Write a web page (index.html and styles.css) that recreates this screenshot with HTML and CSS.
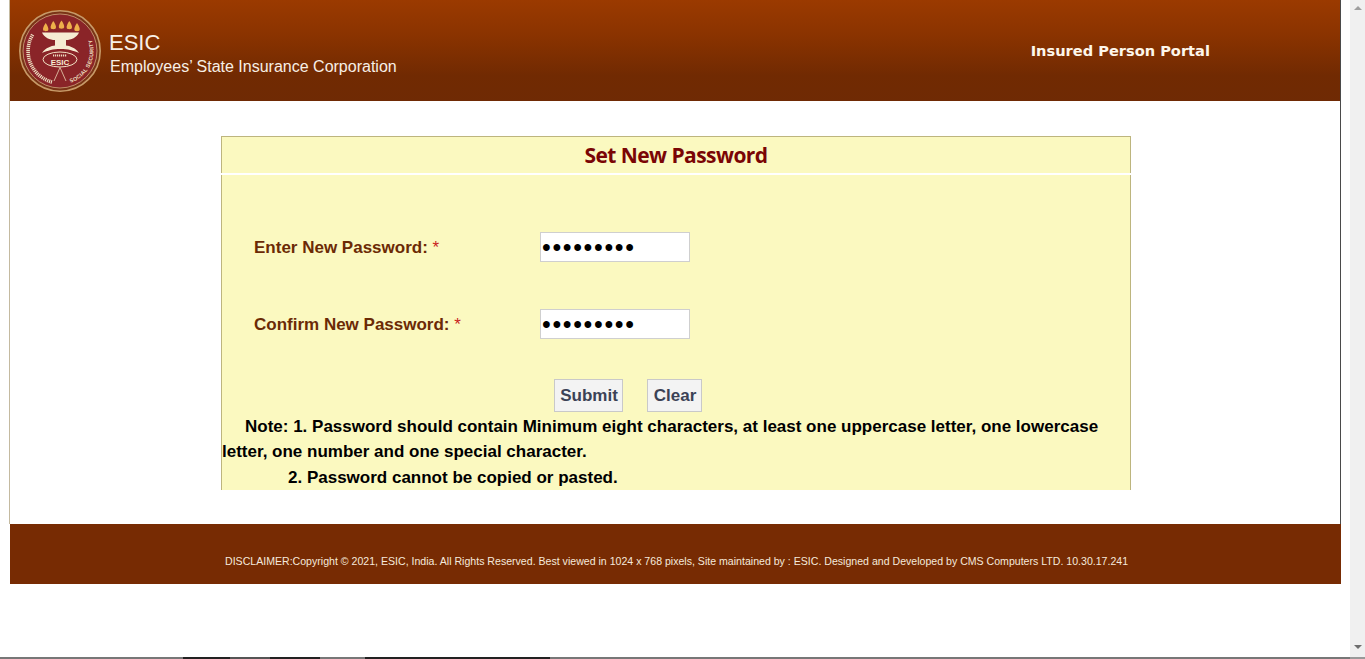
FILE: index.html
```html
<!DOCTYPE html>
<html lang="en">
<head>
<meta charset="utf-8">
<title>ESIC - Set New Password</title>
<link rel="stylesheet" href="styles.css">
</head>
<body>
<div class="window">
  <div class="page">
    <div class="frame">
      <header class="top">
        <svg class="logo" viewBox="0 0 82 82" aria-label="ESIC logo">
          <circle cx="41" cy="41" r="40.2" fill="#7a3416" stroke="#c79a68" stroke-width="1.6"/>
          <circle cx="41" cy="41" r="37" fill="#8a2428" stroke="#cfa67c" stroke-width=".8"/>
          <g fill="#eeb04a">
            <path d="M26.7 13c2 3 3 5 2.6 7-.4 1.6-4.8 1.6-5.2 0-.4-2 .6-4 2.6-7z"/>
            <path d="M34.3 11c2 3 3 5 2.6 7-.4 1.6-4.8 1.6-5.2 0-.4-2 .6-4 2.6-7z"/>
            <path d="M42.5 10.5c2 3 3 5 2.6 7-.4 1.6-4.8 1.6-5.2 0-.4-2 .6-4 2.6-7z"/>
            <path d="M50.3 11c2 3 3 5 2.6 7-.4 1.6-4.8 1.6-5.2 0-.4-2 .6-4 2.6-7z"/>
            <path d="M58 13c2 3 3 5 2.6 7-.4 1.6-4.8 1.6-5.2 0-.4-2 .6-4 2.6-7z"/>
          </g>
          <path class="lamp" d="M23 22.5h37c-2 5-8 7.500-13 7.500v5.500c4 .5 9 2 13 7.500-6-2.500-11-4-18.500-4s-12.500 1.500-18.500 4c4-5.500 9-7 13-7.500v-5.500c-5 0-11-2.500-13-7.500z"/>
          <ellipse cx="41" cy="49.500" rx="17" ry="7.500" fill="#8a2428" stroke="#f2e3c6" stroke-width="1"/>
          <path class="script script-small" d="M34 45.600h14"/>
          <text class="logo-word" x="41" y="54.500" text-anchor="middle">ESIC</text>
          <path d="M41 57.500 35 71M41 57.500 47 71" stroke="#e9d3b4" stroke-width=".8" fill="none"/>
          <path class="script" d="M33 72A32 32 0 0 1 14 24"/>
          <path id="ring" d="M51.500 72.800A33.500 33.500 0 0 0 68 21" fill="none"/>
          <text class="logo-ring"><textPath href="#ring">SOCIAL SECURITY</textPath></text>
        </svg>
        <div class="brand">
          <div class="brand-name">ESIC</div>
          <div class="brand-sub">Employees’ State Insurance Corporation</div>
        </div>
        <div class="portal">Insured Person Portal</div>
      </header>
      <main class="content">
        <section class="panel">
          <h1 class="panel-title">Set New Password</h1>
          <form class="panel-body">
            <div class="field">
              <label class="field-label" for="p1">Enter New Password: <span class="req">*</span></label>
              <input class="field-input" id="p1" type="password" value="abcdefghi">
            </div>
            <div class="field">
              <label class="field-label" for="p2">Confirm New Password: <span class="req">*</span></label>
              <input class="field-input" id="p2" type="password" value="abcdefghi">
            </div>
            <div class="actions">
              <button class="btn btn-submit" type="button">Submit</button>
              <button class="btn btn-clear" type="button">Clear</button>
            </div>
            <p class="note">Note: 1. Password should contain Minimum eight characters, at least one uppercase letter, one lowercase letter, one number and one special character.</p>
            <p class="note note-2">2. Password cannot be copied or pasted.</p>
          </form>
        </section>
      </main>
    </div>
    <footer class="foot">DISCLAIMER:Copyright © 2021, ESIC, India. All Rights Reserved. Best viewed in 1024 x 768 pixels, Site maintained by : ESIC. Designed and Developed by CMS Computers LTD. 10.30.17.241</footer>
  </div>
  <div class="scrollbar">
    <span class="arrow arrow-up"></span>
    <span class="arrow arrow-down"></span>
  </div>
</div>
<div class="taskbar"></div>
</body>
</html>
```
FILE: styles.css
```css
* { box-sizing: border-box; }
html, body { margin: 0; height: 100%; overflow: hidden; background: #fff; }
body { display: flex; flex-direction: column; font-family: "Liberation Sans", Arial, sans-serif; }
.window { flex: 1; display: flex; min-height: 0; }
.page { width: 1350px; padding-left: 9px; }
.frame { width: 1332px; height: 524px; border-left: 1px solid #c4baa0; border-right: 1px solid #4a4a4a; }
.top { height: 101px; display: flex; align-items: center; background: linear-gradient(#9b3a00 0%, #8a3300 35%, #712a02 75%, #6f2a04 100%); }
.logo { width: 82px; height: 82px; margin-left: 9px; flex: none; }
.lamp { fill: #f6ecd2; }
.logo-word { font: bold 8px "Liberation Sans", sans-serif; fill: #f6ecd2; }
.logo-ring { font: bold 5.400px "Liberation Sans", sans-serif; fill: #f0e0c4; letter-spacing: .3px; }
.script { fill: none; stroke: #ecdcc0; stroke-width: 3.600; stroke-dasharray: 1.200 .8; }
.script-small { stroke-width: 2px; }
.brand { align-self: flex-start; margin-left: 9px; color: #f7efe6; padding-top: 29px; }
.brand-name { font-size: 22px; line-height: 27px; margin-left: -1px; }
.brand-sub { font-size: 16px; line-height: 20px; margin-top: 1px; }
.portal { align-self: flex-start; margin-left: 634px; padding-top: 42px; font: bold 14.600px "DejaVu Sans", Verdana, sans-serif; color: #fdf6ea; width: 190px; }
.content { padding: 35px 0 0 211px; }
.panel { width: 910px; height: 354px; background: #fbf9c0; border: 1px solid #bdb57e; border-bottom: 0; }
.panel-title { margin: 0; height: 36px; text-align: center; font: bold 21px/37px "Open Sans", sans-serif; letter-spacing: -.55px; color: #7a0505; }
.panel-body { margin: 0 -1px; border-top: 2px solid #fff; padding-top: 57px; }
.field { display: flex; align-items: center; height: 30px; margin-bottom: 47px; padding-left: 33px; }
.field-label { width: 286px; padding-top: 2px; font-size: 17px; font-weight: bold; color: #6b2a05; }
.req { color: #c81e1e; font-weight: normal; }
.field-input { width: 150px; height: 30px; border: 1px solid #cfcfcf; background: #fff; padding: 0 0 0 1px; font: 25px/28px "Liberation Sans", sans-serif; letter-spacing: 1.650px; color: #000; outline: none; }
.actions { display: flex; gap: 24px; padding-left: 333px; margin-top: -7px; }
.btn { height: 33px; padding: 1px 0 0 1px; border: 1px solid #c9c9c9; background: #f3f3f3; font: bold 17px "Liberation Sans", sans-serif; color: #3b4256; }
.btn-submit { width: 69px; }
.btn-clear { width: 55px; }
.note { margin: 0 1px; font-size: 17px; font-weight: bold; line-height: 25.500px; color: #000; text-indent: 23px; }
.note:first-of-type { margin-top: 1.500px; }
.note-2 { text-indent: 0; padding-left: 66px; }
.foot { width: 1331px; height: 60px; margin-left: 1px; padding-left: 215px; padding-top: 31px; background: #772b03; color: #f5e9dc; font-size: 10.580px; line-height: 13px; white-space: nowrap; }
.scrollbar { width: 15px; background: #f0f0f0; display: flex; flex-direction: column; justify-content: space-between; align-items: center; padding: 6px 0 8px; }
.arrow { width: 0; height: 0; border-left: 4px solid transparent; border-right: 4px solid transparent; }
.arrow-up { border-bottom: 4px solid #9e9e9e; }
.arrow-down { border-top: 4px solid #6e6e6e; }
.taskbar { height: 2px; background: linear-gradient(90deg, #777 0 183px, #222 183px 230px, #555 230px 270px, #222 270px 320px, #777 320px 365px, #222 365px 550px, #777 550px 1350px, #999 1350px); }
```
